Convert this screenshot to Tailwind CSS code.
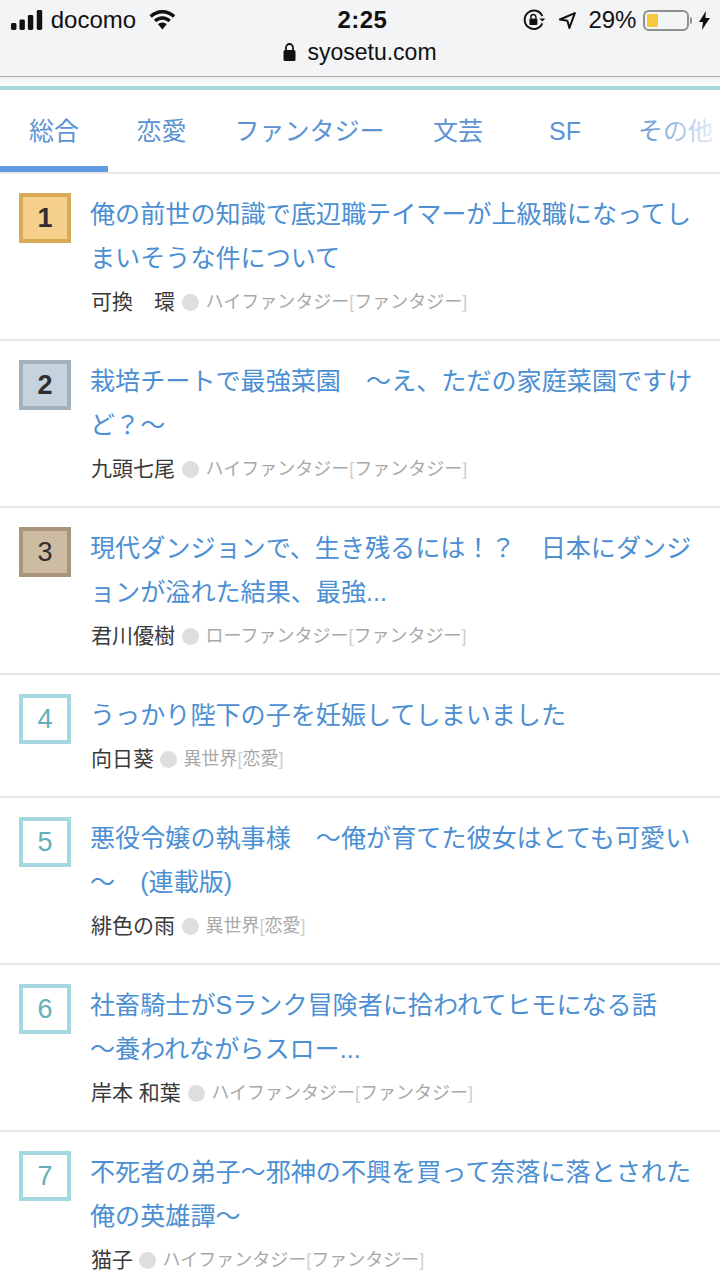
<!DOCTYPE html>
<html lang="ja">
<head>
  <meta charset="UTF-8">
  <meta name="viewport" content="width=device-width, initial-scale=1.0">
  <title>syosetu.com</title>
  <script src="https://cdn.jsdelivr.net/npm/@tailwindcss/browser@4"></script>
</head>
<body class="bg-white h-[1280px] overflow-hidden font-['Liberation_Sans','Noto_Sans_CJK_JP',sans-serif]">
  <!-- Browser chrome -->
  <header class="h-[77px] bg-[#f3f4f6] border-b border-[#a9a9ab] text-[#111]">
    <div class="h-[40px] pl-[11px] pr-[10px] flex items-center">
      <svg width="32" height="20" viewBox="0 0 32 20" fill="#111"><rect x="0" y="13" width="5.5" height="7" rx="1.5"/><rect x="8.5" y="9.5" width="5.5" height="10.5" rx="1.5"/><rect x="17" y="5" width="5.5" height="15" rx="1.5"/><rect x="26" y="0" width="5.5" height="20" rx="1.5"/></svg>
      <span class="ml-[8px] text-[24px] leading-none w-[99px]">docomo</span>
      <svg width="27" height="20" viewBox="0 0 27 20" fill="#111"><path d="M13.5 0C8.4 0 3.9 2 .5 5.3l2.3 2.5C5.6 5 9.4 3.4 13.5 3.4s7.9 1.6 10.7 4.4l2.3-2.5C23.100 2 18.600 0 13.500 0z"/><path d="M13.500 6.300c-3.300 0-6.300 1.300-8.500 3.500l2.400 2.500c1.600-1.600 3.700-2.500 6.100-2.500s4.500.9 6.100 2.500L22 9.800c-2.200-2.200-5.200-3.500-8.500-3.500z"/><path d="M13.500 12.600c-1.800 0-3.300.7-4.400 1.800l4.400 5.100 4.400-5.100c-1.100-1.100-2.600-1.800-4.400-1.800z"/></svg>
      <span class="ml-[162px] text-[24px] leading-none font-bold w-[187px] tracking-[0.4px]">2:25</span>
      <svg width="23" height="22" viewBox="0 0 23 22" fill="none" stroke="#111" stroke-width="2"><path d="M19.500 14.500A9.300 9.300 0 1 1 19.500 7"/><path d="M22.500 9.500l-3 3-3-3" fill="#111" stroke="none"/><rect x="6.500" y="9.500" width="8" height="6.500" rx="1" fill="#111" stroke="none"/><path d="M8 9.500V8a2.500 2.500 0 0 1 5 0v1.500" stroke-width="1.500"/></svg>
      <svg class="ml-[12px]" width="19" height="19" viewBox="0 0 19 19" fill="none" stroke="#111" stroke-width="2" stroke-linejoin="round"><path d="M17 2L2 8.500l7.500 1.200L11.500 17z"/></svg>
      <span class="ml-[12px] text-[24px] leading-none">29%</span>
      <div class="ml-[7px] w-[46px] h-[21px] border-2 border-[#8f8f8f] rounded-[6px] p-[2px] bg-[#f3f4f6]">
        <div class="w-[11px] h-full bg-[#f6c93f] rounded-[1px]"></div>
      </div>
      <div class="ml-[1px] w-[2px] h-[7px] bg-[#8f8f8f] rounded-r-full"></div>
      <svg class="ml-[7px]" width="11" height="19" viewBox="0 0 11 19" fill="#111"><path d="M7 0L0 11h4l-1 8 8-12H6.500z"/></svg>
    </div>
    <div class="h-[24px] flex items-center justify-center">
      <svg width="13" height="18" viewBox="0 0 13 18" fill="#111"><rect x="0.500" y="7" width="12" height="11" rx="1.500"/><path d="M3 8V4.500a3.500 3.500 0 0 1 7 0V8" fill="none" stroke="#111" stroke-width="1.800"/></svg>
      <span class="ml-[11px] text-[23px] leading-none">syosetu.com</span>
    </div>
  </header>
  <div class="h-[9px] bg-gradient-to-b from-[#f0f1f3] to-[#fafbfb]"></div>
  <div class="h-[4px] bg-[#a9d8e0]"></div>

  <!-- Tabs -->
  <nav class="relative h-[84px] border-b-2 border-[#e8e8e8] flex text-[25px] text-[#5b93d3] overflow-hidden">
    <a class="min-w-[108px] h-[82px] px-[20px] pt-[23px] text-center border-b-[6px] border-[#5f9be0]">総合</a>
    <a class="min-w-[107px] px-[20px] pt-[23px] text-center">恋愛</a>
    <a class="w-[189px] pt-[23px] text-center shrink-0">ファンタジー</a>
    <a class="min-w-[108px] px-[20px] pt-[23px] text-center">文芸</a>
    <a class="min-w-[106px] px-[20px] pt-[23px] text-center font-medium">SF</a>
    <a class="min-w-[112px] px-[20px] pt-[23px] text-center shrink-0">その他</a>
    <div class="absolute top-0 right-0 w-[85px] h-[80px] bg-gradient-to-r from-white/0 to-white/90"></div>
  </nav>

  <!-- Ranking -->
  <ul class="text-[#4c8fd3]">
    <li class="h-[167px] border-b-2 border-[#e6e6e6] pl-[19px] pt-[19px] flex">
      <div class="w-[52px] h-[50px] shrink-0 border-[4px] border-[#d8aa55] bg-[#f5d08c] flex items-center justify-center text-[27px] font-bold text-[#2f2f2f]">1</div>
      <div class="ml-[19px] -mt-[1px]">
        <p class="text-[25.1px] leading-[44px]">俺の前世の知識で底辺職テイマーが上級職になってし<br>まいそうな件について</p>
        <div class="mt-[7px] pl-[1px] flex items-center h-[30px]"><span class="text-[21px] text-[#3a3a3a]">可換　環</span><span class="ml-[7px] w-[17px] h-[17px] rounded-full bg-[#dedede]"></span><span class="ml-[6.5px] text-[18px] text-[#a8a8a8]">ハイファンタジー<span class="text-[#d0d0d0]">[</span>ファンタジー<span class="text-[#d0d0d0]">]</span></span></div>
      </div>
    </li>
    <li class="h-[167px] border-b-2 border-[#e6e6e6] pl-[19px] pt-[19px] flex">
      <div class="w-[52px] h-[50px] shrink-0 border-[4px] border-[#a3b1bd] bg-[#c5d3de] flex items-center justify-center text-[27px] font-bold text-[#2f2f2f]">2</div>
      <div class="ml-[19px] -mt-[1px]">
        <p class="text-[25.1px] leading-[44px]">栽培チートで最強菜園　～え、ただの家庭菜園ですけ<br>ど？～</p>
        <div class="mt-[7px] pl-[1px] flex items-center h-[30px]"><span class="text-[21px] text-[#3a3a3a]">九頭七尾</span><span class="ml-[7px] w-[17px] h-[17px] rounded-full bg-[#dedede]"></span><span class="ml-[6.5px] text-[18px] text-[#a8a8a8]">ハイファンタジー<span class="text-[#d0d0d0]">[</span>ファンタジー<span class="text-[#d0d0d0]">]</span></span></div>
      </div>
    </li>
    <li class="h-[167px] border-b-2 border-[#e6e6e6] pl-[19px] pt-[19px] flex">
      <div class="w-[52px] h-[50px] shrink-0 border-[4px] border-[#a8957a] bg-[#cdbba3] flex items-center justify-center text-[27px] text-[#2f2f2f]">3</div>
      <div class="ml-[19px] -mt-[1px]">
        <p class="text-[25.1px] leading-[44px]">現代ダンジョンで、生き残るには！？　日本にダンジ<br>ョンが溢れた結果、最強...</p>
        <div class="mt-[7px] pl-[1px] flex items-center h-[30px]"><span class="text-[21px] text-[#3a3a3a]">君川優樹</span><span class="ml-[7px] w-[17px] h-[17px] rounded-full bg-[#dedede]"></span><span class="ml-[6.5px] text-[18px] text-[#a8a8a8]">ローファンタジー<span class="text-[#d0d0d0]">[</span>ファンタジー<span class="text-[#d0d0d0]">]</span></span></div>
      </div>
    </li>
    <li class="h-[123px] border-b-2 border-[#e6e6e6] pl-[19px] pt-[19px] flex">
      <div class="w-[52px] h-[50px] shrink-0 border-[4px] border-[#a5d8e0] flex items-center justify-center text-[27px] text-[#62b0b8]">4</div>
      <div class="ml-[19px] -mt-[1px]">
        <p class="text-[25.1px] leading-[44px]">うっかり陛下の子を妊娠してしまいました</p>
        <div class="mt-[7px] pl-[1px] flex items-center h-[30px]"><span class="text-[21px] text-[#3a3a3a]">向日葵</span><span class="ml-[6px] w-[17px] h-[17px] rounded-full bg-[#dedede]"></span><span class="ml-[6.5px] text-[18px] text-[#a8a8a8]">異世界<span class="text-[#d0d0d0]">[</span>恋愛<span class="text-[#d0d0d0]">]</span></span></div>
      </div>
    </li>
    <li class="h-[167px] border-b-2 border-[#e6e6e6] pl-[19px] pt-[19px] flex">
      <div class="w-[52px] h-[50px] shrink-0 border-[4px] border-[#a5d8e0] flex items-center justify-center text-[27px] text-[#62b0b8]">5</div>
      <div class="ml-[19px] -mt-[1px]">
        <p class="text-[25.1px] leading-[44px]">悪役令嬢の執事様　～俺が育てた彼女はとても可愛い<br>～　(連載版)</p>
        <div class="mt-[7px] pl-[1px] flex items-center h-[30px]"><span class="text-[21px] text-[#3a3a3a]">緋色の雨</span><span class="ml-[7px] w-[17px] h-[17px] rounded-full bg-[#dedede]"></span><span class="ml-[6.5px] text-[18px] text-[#a8a8a8]">異世界<span class="text-[#d0d0d0]">[</span>恋愛<span class="text-[#d0d0d0]">]</span></span></div>
      </div>
    </li>
    <li class="h-[167px] border-b-2 border-[#e6e6e6] pl-[19px] pt-[19px] flex">
      <div class="w-[52px] h-[50px] shrink-0 border-[4px] border-[#a5d8e0] flex items-center justify-center text-[27px] text-[#62b0b8]">6</div>
      <div class="ml-[19px] -mt-[1px]">
        <p class="text-[25.1px] leading-[44px]">社畜騎士がSランク冒険者に拾われてヒモになる話<br>～養われながらスロー...</p>
        <div class="mt-[7px] pl-[1px] flex items-center h-[30px]"><span class="text-[21px] text-[#3a3a3a]">岸本 和葉</span><span class="ml-[7px] w-[17px] h-[17px] rounded-full bg-[#dedede]"></span><span class="ml-[6.5px] text-[18px] text-[#a8a8a8]">ハイファンタジー<span class="text-[#d0d0d0]">[</span>ファンタジー<span class="text-[#d0d0d0]">]</span></span></div>
      </div>
    </li>
    <li class="h-[167px] pl-[19px] pt-[19px] flex">
      <div class="w-[52px] h-[50px] shrink-0 border-[4px] border-[#a5d8e0] flex items-center justify-center text-[27px] text-[#62b0b8]">7</div>
      <div class="ml-[19px] -mt-[1px]">
        <p class="text-[25.1px] leading-[44px]">不死者の弟子～邪神の不興を買って奈落に落とされた<br>俺の英雄譚～</p>
        <div class="mt-[7px] pl-[1px] flex items-center h-[30px]"><span class="text-[21px] text-[#3a3a3a]">猫子</span><span class="ml-[6px] w-[17px] h-[17px] rounded-full bg-[#dedede]"></span><span class="ml-[6.5px] text-[18px] text-[#a8a8a8]">ハイファンタジー<span class="text-[#d0d0d0]">[</span>ファンタジー<span class="text-[#d0d0d0]">]</span></span></div>
      </div>
    </li>
  </ul>
</body>
</html>
